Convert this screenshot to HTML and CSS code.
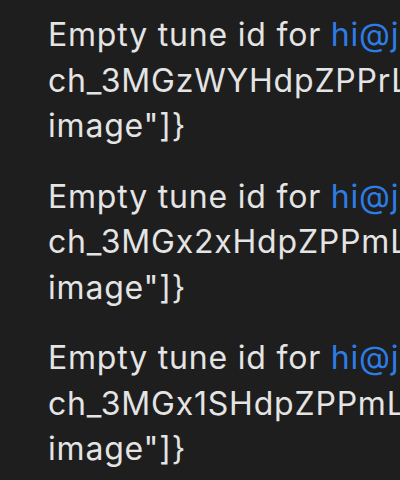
FILE: index.html
```html
<!DOCTYPE html>
<html lang="en">

<head>
	<meta charset="UTF-8">
	<title>Log</title>
	<link rel="stylesheet" href="styles.css">
</head>

<body>
	<div class="log">
		<p class="entry">Empty tune id for <a href="#">hi@jenny.studio</a>: {"charge":"
ch_3MGzWYHdpZPPrLtr1xQ9wKcd","type":"
image"]}</p>
		<p class="entry">Empty tune id for <a href="#">hi@jenny.studio</a>: {"charge":"
ch_3MGx2xHdpZPPmLtr0aB7eRfh","type":"
image"]}</p>
		<p class="entry">Empty tune id for <a href="#">hi@jenny.studio</a>: {"charge":"
ch_3MGx1SHdpZPPmLtr1kZ4pNvs","type":"
image"]}</p>
	</div>
</body>

</html>
```

FILE: styles.css
```css
* {
	margin: 0;
	padding: 0;
}

html,
body {
	width: 400px;
	height: 480px;
	overflow: hidden;
	background: #1e1e1e;
}

.log {
	padding: 12px 0 0 48px;
	display: flex;
	flex-direction: column;
	gap: 25px;
	width: 900px;
}

.entry {
	font-family: Inter, "Liberation Sans", sans-serif;
	font-size: 32px;
	letter-spacing: 0.8px;
	line-height: 45.5px;
	color: #e4e4e4;
	white-space: pre;
}

.entry a {
	color: #2c7de6;
	text-decoration: none;
}
```
